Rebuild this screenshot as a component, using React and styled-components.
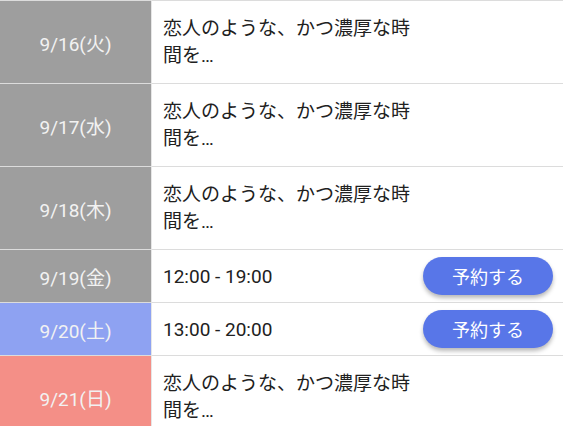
import React from "react";
import styled, { createGlobalStyle } from "styled-components";

const GlobalStyle = createGlobalStyle`
  body {
    margin: 0;
    background: #ffffff;
    font-family: Roboto, "Noto Sans CJK JP", sans-serif;
  }
`;

const Table = styled.table`
  width: 563px;
  border-collapse: collapse;
  table-layout: fixed;
  border-top: 1px solid #dcdcdc;
`;

const Row = styled.tr`
  border-bottom: 1px solid #dcdcdc;
`;

const DateCell = styled.td`
  width: 151px;
  padding: 0;
  text-align: center;
  vertical-align: middle;
  font-size: 19px;
  color: #f2f2f2;
  background: ${(p) => p.$bg};
  border-right: 1px solid #e6e6e6;
`;

const TextCell = styled.td`
  padding: ${(p) => (p.$compact ? "12px" : "14px")} 6px
    ${(p) => (p.$compact ? "12px" : "14px")} 11px;
  vertical-align: middle;
  font-size: 19px;
  line-height: 27px;
  color: #212121;
`;

const ActionCell = styled.td`
  width: 130px;
  padding: 7px 10px 7px 0;
  text-align: right;
  vertical-align: middle;
`;

const ReserveButton = styled.button`
  width: 130px;
  height: 38px;
  border: none;
  border-radius: 19px;
  background: #5876e8;
  color: #ffffff;
  font-family: Roboto, "Noto Sans CJK JP", sans-serif;
  font-size: 18px;
  box-shadow: 0 3px 4px rgba(0, 0, 0, 0.28);
  cursor: pointer;
`;

const colors = {
  weekday: "#9e9e9e",
  sat: "#8ea2f2",
  sun: "#f48f87",
};

const rows = [
  { date: "9/16(火)", kind: "weekday", text: "恋人のような、かつ濃厚な時間を…" },
  { date: "9/17(水)", kind: "weekday", text: "恋人のような、かつ濃厚な時間を…" },
  { date: "9/18(木)", kind: "weekday", text: "恋人のような、かつ濃厚な時間を…" },
  { date: "9/19(金)", kind: "weekday", text: "12:00 - 19:00", reserve: true },
  { date: "9/20(土)", kind: "sat", text: "13:00 - 20:00", reserve: true },
  { date: "9/21(日)", kind: "sun", text: "恋人のような、かつ濃厚な時間を…" },
];

const App = () => {
  return (
    <>
      <GlobalStyle />
      <Table>
        <tbody>
          {rows.map((r) => (
            <Row key={r.date}>
              <DateCell $bg={colors[r.kind]}>{r.date}</DateCell>
              <TextCell $compact={r.reserve}>{r.text}</TextCell>
              <ActionCell>
                {r.reserve && <ReserveButton>予約する</ReserveButton>}
              </ActionCell>
            </Row>
          ))}
        </tbody>
      </Table>
    </>
  );
};

export default App;
